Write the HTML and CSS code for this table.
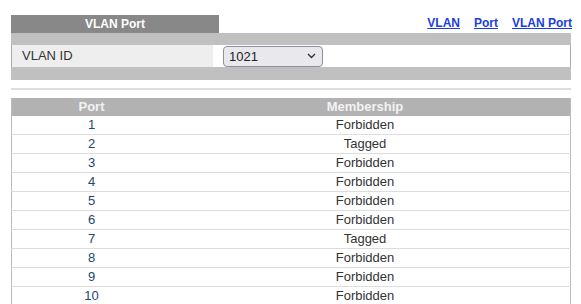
FILE: index.html
```html
<!DOCTYPE html>
<html>
<head>
<meta charset="utf-8">
<link rel="stylesheet" href="styles.css">
</head>
<body>
<div class="page">
  <div class="top">
    <div class="title">VLAN Port</div>
    <div class="links">
      <a href="#">VLAN</a>
      <a href="#">Port</a>
      <a href="#">VLAN Port</a>
    </div>
  </div>
  <div class="bar"></div>
  <div class="row">
    <div class="label">VLAN ID</div>
    <div class="value">
      <select class="sel"><option>1021</option></select>
    </div>
  </div>
  <div class="bar bar-bottom"></div>
  <div class="sep"></div>
  <table class="ports">
    <thead>
      <tr><th class="c1">Port</th><th class="c2">Membership</th></tr>
    </thead>
    <tbody>
      <tr><td class="c1">1</td><td class="c2">Forbidden</td></tr>
      <tr><td class="c1">2</td><td class="c2">Tagged</td></tr>
      <tr><td class="c1">3</td><td class="c2">Forbidden</td></tr>
      <tr><td class="c1">4</td><td class="c2">Forbidden</td></tr>
      <tr><td class="c1">5</td><td class="c2">Forbidden</td></tr>
      <tr><td class="c1">6</td><td class="c2">Forbidden</td></tr>
      <tr><td class="c1">7</td><td class="c2">Tagged</td></tr>
      <tr><td class="c1">8</td><td class="c2">Forbidden</td></tr>
      <tr><td class="c1">9</td><td class="c2">Forbidden</td></tr>
      <tr><td class="c1">10</td><td class="c2">Forbidden</td></tr>
    </tbody>
  </table>
</div>
</body>
</html>
```
FILE: styles.css
```css
html, body {
  margin: 0;
  padding: 0;
  background: #fff;
  font-family: "Liberation Sans", Arial, sans-serif;
  font-size: 13px;
  color: #333;
}
.page {
  width: 560px;
  padding: 15px 0 0 11px;
}
.top {
  display: flex;
  justify-content: space-between;
  align-items: flex-end;
}
.title {
  width: 208px;
  height: 18px;
  line-height: 18px;
  background: #888;
  color: #fff;
  font-weight: bold;
  font-size: 12px;
  text-align: center;
}
.links {
  display: flex;
  gap: 14px;
  padding-bottom: 3px;
  margin-right: -1px;
}
.links a {
  color: #1a3de0;
  font-weight: bold;
  font-size: 12px;
  text-decoration: underline;
}
.bar {
  height: 12px;
  background: #c0c0c0;
}
.bar-bottom {
  height: 13px;
}
.row {
  display: flex;
  height: 22px;
}
.label {
  width: 191px;
  background: #eee;
  border-left: 1px solid #aaa;
  padding-left: 10px;
  line-height: 22px;
}
.value {
  flex: 1;
  background: #fff;
  border-right: 1px solid #aaa;
  display: flex;
  align-items: center;
  padding-left: 10px;
}
.sel {
  -webkit-appearance: none;
  appearance: none;
  width: 100px;
  height: 21px;
  margin: 0;
  padding: 0 0 0 5px;
  border: 1px solid #8f8f9d;
  border-radius: 4px;
  background-color: #e9e9ed;
  background-image: url("data:image/svg+xml;utf8,<svg xmlns='http://www.w3.org/2000/svg' width='9' height='6' viewBox='0 0 9 6'><path d='M1 1 L4.5 4.5 L8 1' fill='none' stroke='%23333' stroke-width='1.4'/></svg>");
  background-repeat: no-repeat;
  background-position: right 6px center;
  font-family: "Liberation Sans", Arial, sans-serif;
  font-size: 13px;
  color: #222;
}
.sep {
  margin-top: 8px;
  height: 2px;
  background: #ddd;
}
.ports {
  margin-top: 8px;
  width: 560px;
  border-collapse: collapse;
  border-left: 1px solid #bbb;
  border-right: 1px solid #bbb;
}
.ports th {
  background: #b2b2b2;
  color: #f2f2f2;
  font-weight: bold;
  height: 18px;
  padding: 0;
  line-height: 18px;
}
.ports td {
  height: 18px;
  padding: 0;
  line-height: 18px;
  border-bottom: 1px solid #ddd;
  text-align: center;
}
.c1 {
  width: 159px;
}
.ports td.c1 {
  color: #24456e;
}
.c2 {
  padding-right: 11px !important;
}
.ports td.c2 {
  color: #333;
}
```
